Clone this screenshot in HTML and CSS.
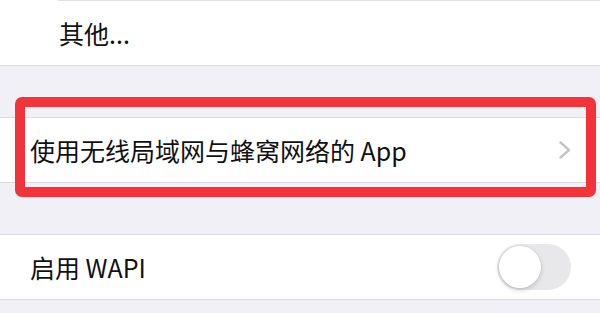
FILE: index.html
```html
<!DOCTYPE html>
<html lang="zh-CN">
<head>
    <meta charset="UTF-8">
    <meta name="viewport" content="width=device-width, initial-scale=1.0">
    <title>无线局域网</title>
    <link rel="stylesheet" href="styles.css">
</head>
<body>

    <div class="screen">
        <!-- Last row of the network list -->
        <div class="group">
            <div class="row row-inset">
                <span class="label">其他...</span>
            </div>
        </div>

        <!-- Apps using WLAN & cellular -->
        <div class="group">
            <div class="row">
                <span class="label">使用无线局域网与蜂窝网络的 App</span>
                <svg class="chevron" width="12" height="18" viewBox="0 0 12 18">
                    <polyline points="1.5,1.5 10,9 1.5,16.5" fill="none" stroke="#c4c4c8" stroke-width="2.4" stroke-linecap="round" stroke-linejoin="round"/>
                </svg>
            </div>
        </div>

        <!-- WAPI toggle -->
        <div class="group">
            <div class="row">
                <span class="label">启用 WAPI</span>
                <span class="switch"><span class="knob"></span></span>
            </div>
        </div>

        <!-- Red marker drawn over the screenshot -->
        <div class="highlight"></div>
    </div>

</body>
</html>
```

FILE: styles.css
```css
/* General body styling */
body {
    margin: 0;
    padding: 0;
    background-color: #f1f0f6;
    font-family: "Noto Sans CJK SC", "Noto Sans", sans-serif;
    color: #111;
    overflow: hidden;
}

.screen {
    position: relative;
    width: 600px;
    height: 313px;
}

/* Grouped table sections */
.group {
    background-color: #fff;
    border-top: 1px solid #dcdce0;
    border-bottom: 1px solid #dcdce0;
    margin-bottom: 51px;
}

.group:first-child {
    border-top: none;
}

.row {
    height: 64px;
    display: flex;
    align-items: center;
    justify-content: space-between;
    padding: 0 29px 0 30px;
}

/* First row: separator starts at the text indent */
.row-inset {
    height: 64px;
    margin-left: 58px;
    padding-left: 1px;
    border-top: 1px solid #e2e2e6;
}

.label {
    font-size: 25px;
    line-height: 1;
}

.chevron {
    display: block;
}

/* iOS style switch, off */
.switch {
    position: relative;
    width: 74px;
    height: 46px;
    border-radius: 23px;
    background-color: #e8e8ea;
}

.switch .knob {
    position: absolute;
    top: 2px;
    left: 2px;
    width: 42px;
    height: 42px;
    border-radius: 50%;
    background-color: #fff;
    box-shadow: 0 2px 5px rgba(0, 0, 0, 0.18), 0 0 0 0.5px rgba(0, 0, 0, 0.06);
}

/* Red annotation box */
.highlight {
    position: absolute;
    top: 97px;
    left: 15px;
    width: 581px;
    height: 100px;
    box-sizing: border-box;
    border: 10px solid #f2333a;
    border-radius: 7px;
    pointer-events: none;
}
```
